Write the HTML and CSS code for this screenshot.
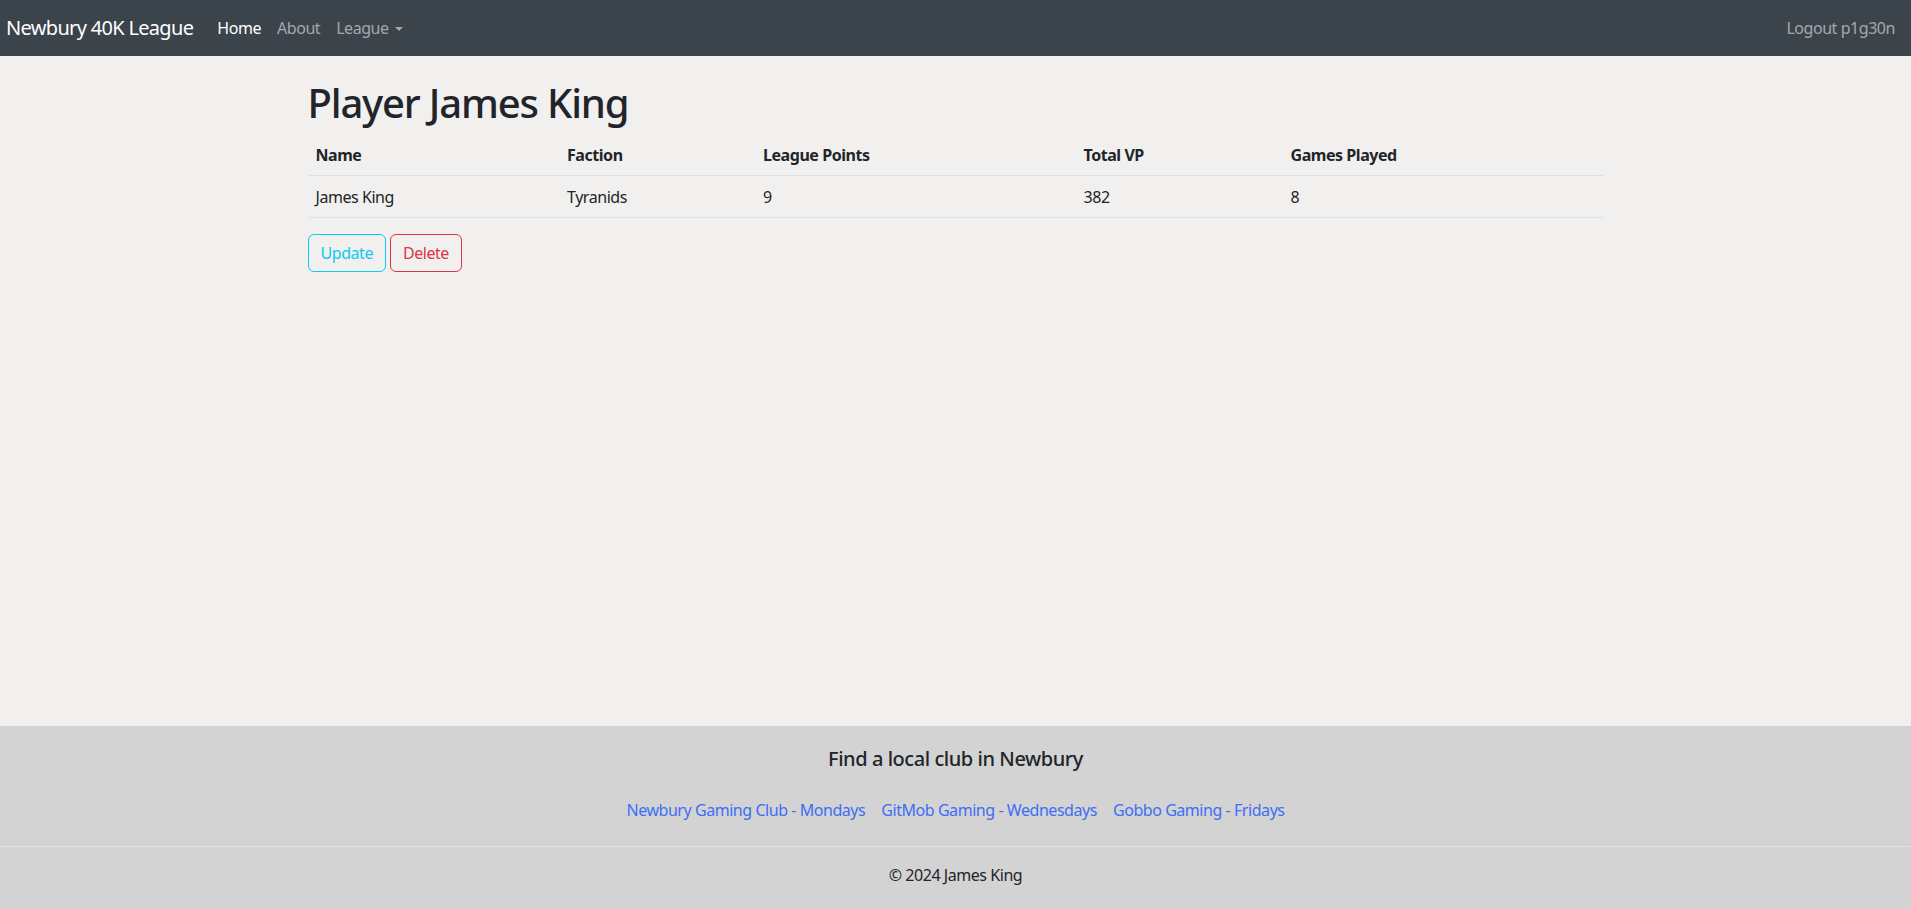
FILE: index.html
```html
<!DOCTYPE html>
<html lang="en">
<head>
<meta charset="utf-8">
<title>Player James King</title>
<link rel="stylesheet" href="styles.css">
</head>
<body>
<nav class="navbar">
  <a class="brand" href="#">Newbury 40K League</a>
  <ul class="nav">
    <li><a class="nav-link active" href="#">Home</a></li>
    <li><a class="nav-link" href="#">About</a></li>
    <li><a class="nav-link dropdown" href="#">League<span class="caret"></span></a></li>
  </ul>
  <div class="nav-right">
    <a class="nav-link" href="#">Logout p1g30n</a>
  </div>
</nav>
<main class="container">
  <h1 class="title">Player James King</h1>
  <table class="table">
    <colgroup>
      <col class="c1"><col class="c2"><col class="c3"><col class="c4"><col class="c5">
    </colgroup>
    <thead>
      <tr><th>Name</th><th>Faction</th><th>League Points</th><th>Total VP</th><th>Games Played</th></tr>
    </thead>
    <tbody>
      <tr><td>James King</td><td>Tyranids</td><td>9</td><td>382</td><td>8</td></tr>
    </tbody>
  </table>
  <div class="actions">
    <a class="btn btn-info" href="#">Update</a>
    <a class="btn btn-danger" href="#">Delete</a>
  </div>
</main>
<footer class="footer">
  <div class="footer-top">
    <h5 class="footer-title">Find a local club in Newbury</h5>
    <div class="club-links">
      <a href="#">Newbury Gaming Club - Mondays</a>
      <a href="#">GitMob Gaming - Wednesdays</a>
      <a href="#">Gobbo Gaming - Fridays</a>
    </div>
  </div>
  <div class="footer-bottom">© 2024 James King</div>
</footer>
</body>
</html>
```

FILE: styles.css
```css
* { box-sizing: border-box; }
html, body { margin: 0; padding: 0; }
body {
  font-family: "Noto Sans", "Open Sans", Arial, sans-serif;
  font-size: 16px;
  line-height: 1.5;
  letter-spacing: -0.028em;
  color: #212529;
  background: #f1f0ee;
  min-height: 100vh;
  display: flex;
  flex-direction: column;
}
a { text-decoration: none; }

.navbar {
  height: 56px;
  background: #3b434b;
  display: flex;
  align-items: center;
  padding: 0 8px 0 6px;
}
.brand {
  color: #fff;
  font-size: 20px;
  letter-spacing: -0.034em;
  margin-right: 16px;
  line-height: 30px;
}
.nav {
  list-style: none;
  margin: 0;
  padding: 0;
  display: flex;
}
.nav-link {
  display: block;
  padding: 8px;
  color: rgba(255,255,255,0.55);
}
.nav-link.active { color: #fff; }
.caret {
  display: inline-block;
  margin-left: 6px;
  vertical-align: 3px;
  border-top: 4.5px solid;
  border-left: 4.5px solid transparent;
  border-right: 4.5px solid transparent;
}
.nav-right { margin-left: auto; }

.container {
  width: 1320px;
  margin: 0 auto;
  padding: 0 12px;
  flex: 1;
}
.title {
  font-size: 40px;
  font-weight: 500;
  line-height: 1.2;
  letter-spacing: -0.029em;
  margin: 23px 0 8px;
}
.table {
  width: 100%;
  border-collapse: collapse;
  margin-bottom: 16px;
}
.c1 { width: 251.5px; }
.c2 { width: 196px; }
.c3 { width: 320.5px; }
.c4 { width: 207px; }
.c5 { width: 321px; }
.table th, .table td {
  text-align: left;
  padding: 8px;
  border-bottom: 1px solid #dee2e6;
}
.table td { padding-top: 9px; padding-bottom: 8px; }
.table th { font-weight: 700; }
.actions { display: flex; gap: 4px; }
.btn {
  display: inline-block;
  padding: 6px 12px;
  border: 1px solid;
  border-radius: 6px;
  line-height: 24px;
}
.btn-info { color: #0dcaf0; border-color: #0dcaf0; }
.btn-danger { color: #dc3545; border-color: #dc3545; }

.footer {
  background: #d3d3d3;
  text-align: center;
  height: 183px;
}
.footer-top {
  padding: 21px 0 24px;
  border-bottom: 1px solid #dee2e6;
}
.footer-title {
  font-size: 20px;
  font-weight: 500;
  line-height: 1.2;
  margin: 0 0 27px;
}
.club-links { display: flex; justify-content: center; gap: 16px; }
.club-links a { color: #3d6ef7; }
.footer-bottom { padding: 16px 0; }
```
